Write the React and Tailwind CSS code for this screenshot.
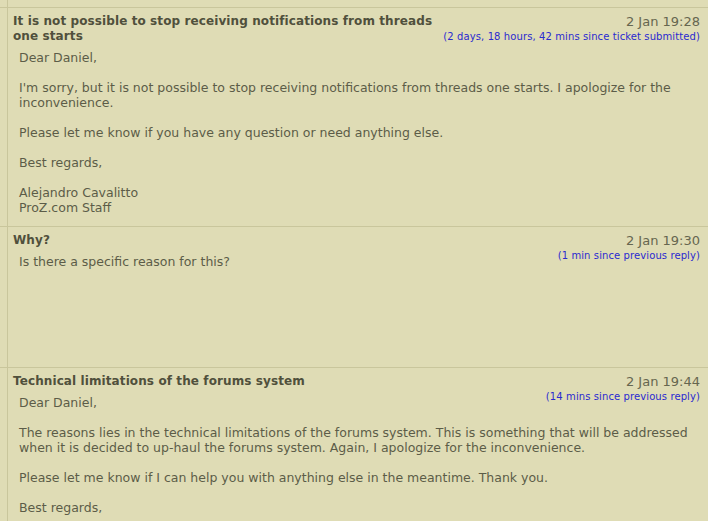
const posts = [
  {
    title: 'It is not possible to stop receiving notifications from threads one starts',
    date: '2 Jan 19:28',
    since: '(2 days, 18 hours, 42 mins since ticket submitted)',
    body: [
      ['Dear Daniel,'],
      ['I\'m sorry, but it is not possible to stop receiving notifications from threads one starts. I apologize for the inconvenience.'],
      ['Please let me know if you have any question or need anything else.'],
      ['Best regards,'],
      ['Alejandro Cavalitto', 'ProZ.com Staff'],
    ],
  },
  {
    title: 'Why?',
    date: '2 Jan 19:30',
    since: '(1 min since previous reply)',
    body: [['Is there a specific reason for this?']],
    tall: true,
  },
  {
    title: 'Technical limitations of the forums system',
    date: '2 Jan 19:44',
    since: '(14 mins since previous reply)',
    body: [
      ['Dear Daniel,'],
      ['The reasons lies in the technical limitations of the forums system. This is something that will be addressed when it is decided to up-haul the forums system. Again, I apologize for the inconvenience.'],
      ['Please let me know if I can help you with anything else in the meantime. Thank you.'],
      ['Best regards,'],
    ],
  },
]

function Post({ post }) {
  return (
    <div className="flex border-t border-[#c9c69c]">
      <div className="w-[8px] shrink-0 border-r border-[#c9c69c]" />
      <div className={`flex-1 pl-[5px] pr-[8px] pt-[6px] pb-[11px] ${post.tall ? 'min-h-[140px]' : ''}`}>
        <div className="float-right ml-[4px] pt-[1px] text-right">
          <div className="text-[13px] leading-[14px] text-[#66664f]">{post.date}</div>
          <div className="text-[10px] leading-[15px] tracking-[0.1px] text-[#2a2ad0]">{post.since}</div>
        </div>
        <div className="text-[12px] font-bold leading-[15px] tracking-[0.1px] text-[#50503c]">{post.title}</div>
        <div className="mt-[6px] pl-[6px] text-[12.5px] leading-[15px] text-[#5c5c48]">
          {post.body.map((para, i) => (
            <p key={i} className={i > 0 ? 'mt-[15px]' : ''}>
              {para.map((line, j) => (
                <span key={j} className="block">{line}</span>
              ))}
            </p>
          ))}
        </div>
      </div>
    </div>
  )
}

export default function App() {
  return (
    <div className="h-[521px] w-[708px] overflow-hidden bg-[#dfdcb5]" style={{ fontFamily: '"DejaVu Sans", Verdana, sans-serif' }}>
      <div className="flex h-[7px]">
        <div className="w-[8px] border-r border-[#c9c69c]" />
      </div>
      {posts.map((p, i) => (
        <Post key={i} post={p} />
      ))}
    </div>
  )
}
